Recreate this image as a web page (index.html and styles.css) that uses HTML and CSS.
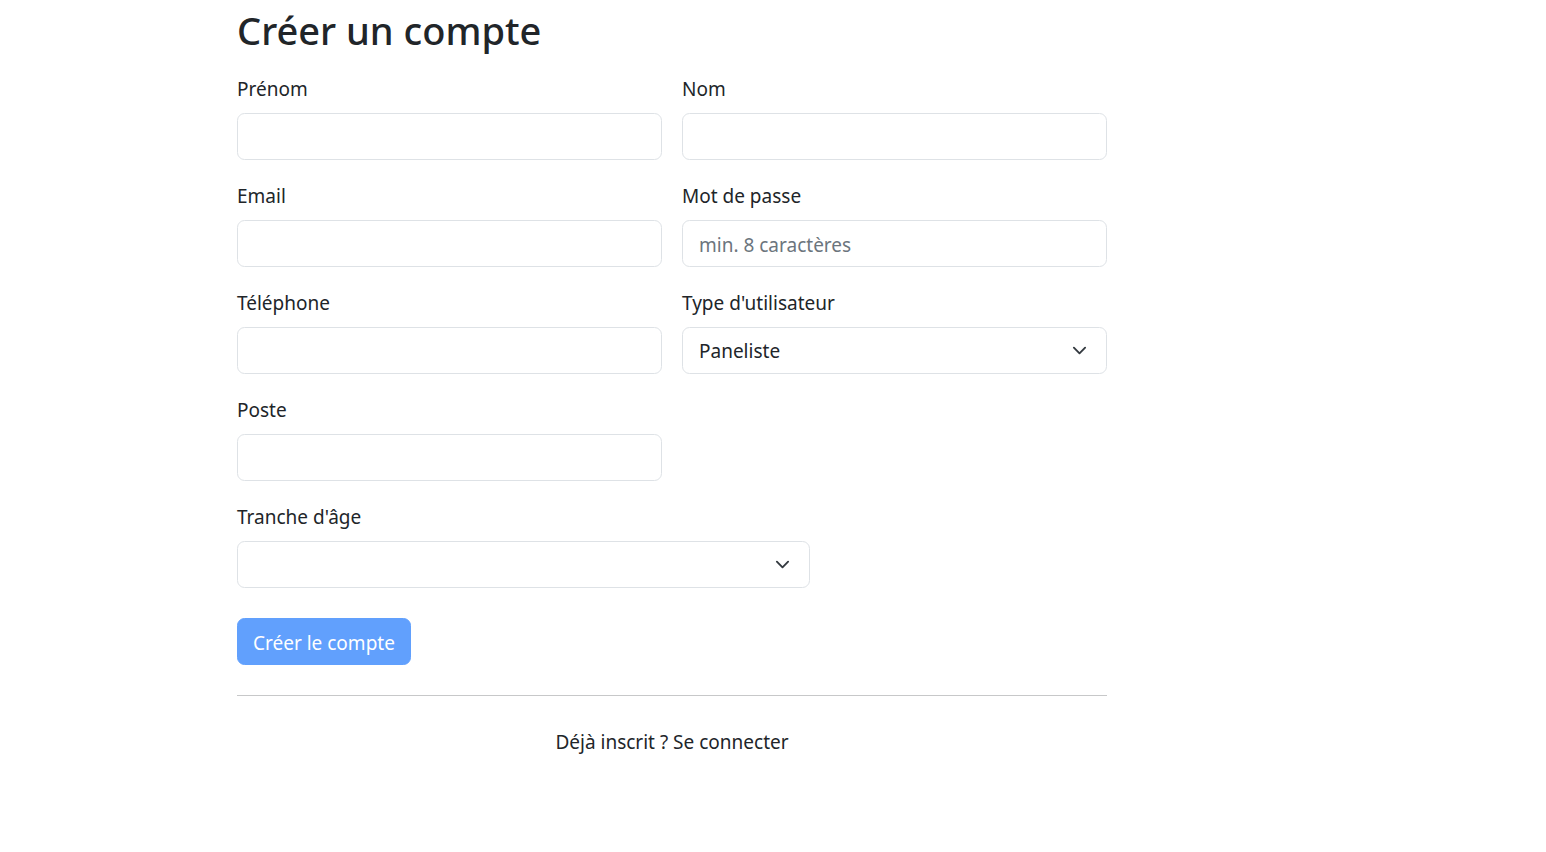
FILE: index.html
```html
<!DOCTYPE html>
<html lang="fr">
<head>
<meta charset="utf-8">
<title>Créer un compte</title>
<link rel="stylesheet" href="styles.css">
</head>
<body>
<main class="page">
  <h2 class="title">Créer un compte</h2>
  <form class="form">
    <div class="field half">
      <label class="label">Prénom</label>
      <input class="control" type="text">
    </div>
    <div class="field half">
      <label class="label">Nom</label>
      <input class="control" type="text">
    </div>
    <div class="field half">
      <label class="label">Email</label>
      <input class="control" type="email">
    </div>
    <div class="field half">
      <label class="label">Mot de passe</label>
      <input class="control" type="password" placeholder="min. 8 caractères">
    </div>
    <div class="field half">
      <label class="label">Téléphone</label>
      <input class="control" type="text">
    </div>
    <div class="field half">
      <label class="label">Type d'utilisateur</label>
      <div class="select">
        <span class="select-value">Paneliste</span>
        <svg class="chevron" viewBox="0 0 16 16" width="15" height="15"><path d="m2 5 6 6 6-6" fill="none" stroke="#343a40" stroke-width="2" stroke-linecap="round" stroke-linejoin="round"/></svg>
      </div>
    </div>
    <div class="field half">
      <label class="label">Poste</label>
      <input class="control" type="text">
    </div>
    <div class="field wide">
      <label class="label">Tranche d'âge</label>
      <div class="select">
        <span class="select-value"></span>
        <svg class="chevron" viewBox="0 0 16 16" width="15" height="15"><path d="m2 5 6 6 6-6" fill="none" stroke="#343a40" stroke-width="2" stroke-linecap="round" stroke-linejoin="round"/></svg>
      </div>
    </div>
    <div class="actions">
      <button class="btn" type="button" disabled>Créer le compte</button>
    </div>
  </form>
  <hr class="divider">
  <p class="footer-text">Déjà inscrit ? Se connecter</p>
</main>
</body>
</html>
```

FILE: styles.css
```css
* { box-sizing: border-box; }
html, body { margin: 0; padding: 0; background: #fff; }
body {
  font-family: "Noto Sans", "Open Sans", sans-serif;
  font-size: 19px;
  line-height: 1.5;
  color: #212529;
}
.page {
  width: 870px;
  margin-left: 237px;
  padding-top: 6px;
}
.title {
  margin: 0 0 19px;
  font-size: 38px;
  font-weight: 500;
  line-height: 48px;
}
.form {
  display: grid;
  grid-template-columns: repeat(6, 1fr);
  column-gap: 20px;
  row-gap: 20px;
}
.field { display: flex; flex-direction: column; }
.half { grid-column: span 3; }
.wide { grid-column: 1 / span 4; }
.label { display: block; line-height: 30px; padding-top: 1px; margin-bottom: 9px; }
.control, .select {
  height: 47px;
  width: 100%;
  border: 1px solid #dee2e6;
  border-radius: 7.5px;
  padding: 2px 16px 0;
  font: inherit;
  color: #212529;
  background: #fff;
}
.control::placeholder { color: #6c757d; opacity: 1; }
.select { display: flex; align-items: center; justify-content: space-between; padding-right: 19px; }
.select .chevron { margin-top: -2px; }
.chevron { flex: none; }
.actions { grid-column: 1 / -1; padding-top: 10px; }
.btn {
  font: inherit;
  color: #fff;
  background: #0d6efd;
  border: 1px solid #0d6efd;
  border-radius: 7.5px;
  padding: 9px 15px 6px;
  line-height: 30px;
  opacity: 0.65;
  height: 47px;
}
.divider {
  margin: 30px 0 0;
  border: 0;
  border-top: 1px solid rgba(33, 37, 41, 0.25);
}
.footer-text { margin: 31px 0 0; text-align: center; line-height: 30px; }
```
